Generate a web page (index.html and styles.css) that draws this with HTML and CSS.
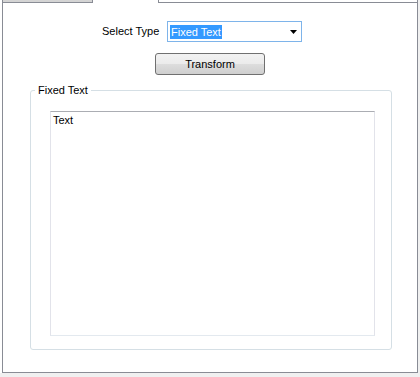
FILE: index.html
```html
<!DOCTYPE html>
<html lang="en">
<head>
    <meta charset="UTF-8">
    <title>Transform</title>
    <link rel="stylesheet" href="styles.css">
</head>
<body>
    <div class="window">
        <div class="panel">
            <div class="tabstrip">
                <div class="tab"></div>
                <div class="tab active"></div>
                <div class="tab-rest"></div>
            </div>
            <div class="type-row">
                <label class="type-label">Select Type</label>
                <div class="combo">
                    <span class="combo-value">Fixed Text</span>
                    <svg class="combo-arrow" width="7" height="4" viewBox="0 0 7 4">
                        <polygon points="0,0 7,0 3.5,4" fill="#000"/>
                    </svg>
                </div>
            </div>
            <button class="btn">Transform</button>
            <fieldset class="group">
                <legend>Fixed Text</legend>
                <div class="textbox">Text</div>
            </fieldset>
        </div>
    </div>
</body>
</html>
```

FILE: styles.css
```css
body {
    margin: 0;
    background-color: #f0f0f0;
    font-family: 'Liberation Sans', Arial, sans-serif;
    font-size: 11px;
    line-height: 13px;
    color: #000;
}
.window {
    width: 418px;
    height: 373px;
    padding-left: 2px;
    box-sizing: border-box;
    background-color: #fff;
}
.panel {
    width: 416px;
    height: 373px;
    box-sizing: border-box;
    border: 1px solid #898c95;
    border-top: none;
    background-color: #fff;
}
.tabstrip {
    display: flex;
    height: 3px;
}
.tab {
    width: 90px;
    height: 3px;
    box-sizing: border-box;
    background-color: #d4d4d4;
    border-right: 1px solid #898c95;
    border-bottom: 1px solid #898c95;
}
.tab.active {
    width: 65px;
    background-color: #fff;
    border: none;
}
.tab-rest {
    flex: 1;
    height: 3px;
    box-sizing: border-box;
    border-left: 1px solid #898c95;
    border-bottom: 1px solid #898c95;
}
.type-row {
    display: flex;
    align-items: center;
    margin: 18px 0 0 99px;
    height: 21px;
}
.type-label {
    width: 65px;
}
.combo {
    display: flex;
    align-items: center;
    width: 135px;
    height: 21px;
    box-sizing: border-box;
    padding: 0 4px 0 2px;
    border: 1px solid #7eb4ea;
    background-color: #fff;
}
.combo-value {
    background-color: #3399ff;
    color: #fff;
    padding: 0 1px;
    line-height: 14px;
}
.combo-arrow {
    margin-left: auto;
}
.btn {
    display: block;
    margin: 11px 0 0 152px;
    width: 110px;
    height: 22px;
    padding: 0;
    font-family: inherit;
    font-size: 11px;
    color: #000;
    border: 1px solid #707070;
    border-radius: 3px;
    background: linear-gradient(#f2f2f2 0%, #ebebeb 50%, #dddddd 51%, #cfcfcf 100%);
}
.group {
    margin: 9px 0 0 27px;
    padding: 0;
    width: 362px;
    box-sizing: border-box;
    border: 1px solid #d5dfe5;
    border-radius: 3px;
}
.group legend {
    margin-left: 4px;
    padding: 0 3px;
}
.textbox {
    margin: 14px 0 13px 19px;
    width: 325px;
    height: 225px;
    box-sizing: border-box;
    padding: 2px 2px;
    border: 1px solid #e2e3ea;
    border-top-color: #abadb3;
    border-bottom-color: #e3e9ef;
}
```
